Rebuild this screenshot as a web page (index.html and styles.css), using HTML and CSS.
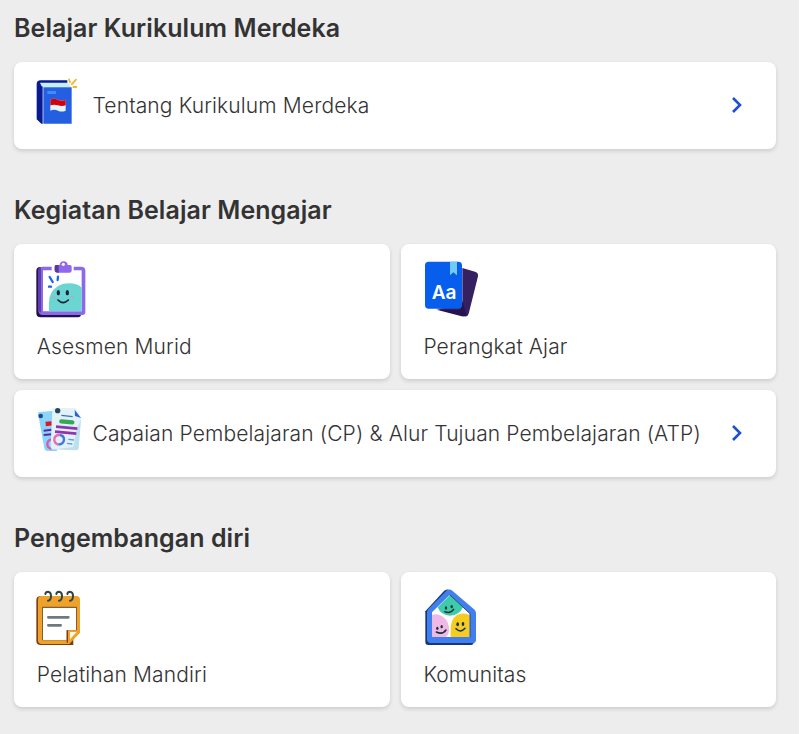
FILE: index.html
```html
<!DOCTYPE html>
<html lang="id">
<head>
  <meta charset="UTF-8">
  <meta name="viewport" content="width=device-width, initial-scale=1.0">
  <title>Kurikulum Merdeka</title>
  <link rel="stylesheet" href="styles.css">
</head>
<body>
  <main class="container">
    <section class="section">
      <h2>Belajar Kurikulum Merdeka</h2>
      <div class="menu">
        <a class="card card-wide">
          <svg class="icon" width="46" height="46" viewBox="30 24 138 138">
            <path d="M44 31h80v15H50v115h-4L32 148V42q0-11 12-11z" fill="#071a91"/>
            <path d="M42 38h85l9 14H54q-10-4-12-14z" fill="#c5eff8"/>
            <path d="M52 52h85v109H52z" fill="#245fe2"/>
            <path d="M64 63h26v9H64z" fill="#418bff"/>
            <path d="M73 89q11-5 23 0t23 0v33q-12 5-23 0t-23 0z" fill="#e6f3f9"/>
            <path d="M73 89q11-5 23 0t23 0v17q-12 4-23 0t-23 0z" fill="#d0020c"/>
            <path d="M129 28l3 9M150 29l-13 14M142 51h9" stroke="#f3b72a" stroke-width="5.5" stroke-linecap="round" fill="none"/>
          </svg>
          <span class="card-text">Tentang Kurikulum Merdeka</span>
          <svg class="arrow" width="12" height="18" viewBox="0 0 12 18"><path d="M2 2l7 7-7 7"/></svg>
        </a>
      </div>
    </section>

    <section class="section">
      <h2>Kegiatan Belajar Mengajar</h2>
      <div class="menu">
        <a class="card">
          <svg class="icon" width="50" height="58" viewBox="30 18 150 174">
            <path d="M43 39h18v131h104v11q0 9-9 9H44q-13 0-13-13V51q0-12 12-12z" fill="#24114a"/>
            <path d="M51 38h114q13 0 13 12v125q0 8-9 8H51q-14 0-14-14V50q0-12 14-12z" fill="#8d68ea"/>
            <path d="M37 50q0-9 8-11v137q-8-2-8-10z" fill="#5d3eae"/>
            <path d="M51 49h116v123H51z" fill="#fff"/>
            <path d="M69 172v-26q0-32 24-48 17-11 41-10 21 1 33 13v71z" fill="#6bd5d1"/>
            <path d="M77 36h66v17H77z" fill="#fff"/>
            <path d="M90 33h11q1-11 12-11t12 11h7q5 0 5 5v12q0 6-7 6H94q-8 0-8-8V38q0-5 4-5z" fill="#8d68ea"/>
            <path d="M90 33h8v23q-12 0-12-8V38q0-5 4-5z" fill="#593994"/>
            <circle cx="112" cy="31" r="5" fill="#f7f2ff"/>
            <path d="M71 69l9 15M96 68l-1 10M69 98h6" stroke="#1e64e9" stroke-width="7" stroke-linecap="round"/>
            <g fill="#17213d"><ellipse cx="97" cy="116" rx="5" ry="8"/><ellipse cx="124" cy="116" rx="5" ry="8"/></g>
            <path d="M96 138q15 16 31 0" fill="none" stroke="#17213d" stroke-width="5" stroke-linecap="round"/>
            <path d="M77 131q4-6 11 0M132 131q6-6 11 0" fill="none" stroke="#b3a9cd" stroke-width="4"/>
          </svg>
          <span class="card-text">Asesmen Murid</span>
        </a>
        <a class="card">
          <svg class="icon" width="57" height="58" viewBox="27 18 171 174">
            <path d="M145 42l38 11q11 4 9 14l-28 112q-3 10-13 8l-83-22 77-10z" fill="#352062"/>
            <path d="M145 140l-2 18q-2 9-12 9H68l75 20q11 2 14-5z" fill="#28134e"/>
            <rect x="33" y="23" width="111" height="141" rx="11" fill="#075eed"/>
            <path d="M108 23h21v41l-11-9-10 9z" fill="#70cbfa"/>
            <text class="icon-label" x="53" y="136">Aa</text>
          </svg>
          <span class="card-text">Perangkat Ajar</span>
        </a>
        <a class="card card-wide">
          <svg class="icon" width="46" height="46" viewBox="30 24 138 138">
            <path d="M36 46q0-4 6-4l44-4 7 121H63q-7 0-8-8z" fill="#8ad5fc"/>
            <path d="M53 98l24-3M53 111l24-2" stroke="#5b29a7" stroke-width="6"/>
            <path d="M59 78l18-2" stroke="#dd1726" stroke-width="13"/>
            <path d="M75 124q-12 4-11 16 1 11 13 12" fill="none" stroke="#d65cac" stroke-width="7"/>
            <circle cx="44" cy="54" r="7" fill="#174b90"/>
            <path d="M83 30h65l17 29-8 89q0 8-7 8l-67-2q-8 0-9-8l5-109q0-7 4-7z" fill="#e2f2f8"/>
            <path d="M146 35l19 25-18-6z" fill="#2a62d6"/>
            <path d="M153 90l12-25-7 86q-1 6-8 6l-63-3 55-7z" fill="#bde0eb"/>
            <circle cx="95" cy="38" r="8" fill="#24445f"/>
            <path d="M106 52l34 4" stroke="#366bd3" stroke-width="4"/>
            <path d="M106 70l33 3" stroke="#34a853" stroke-width="13" stroke-linecap="round"/>
            <path d="M90 86l64 6M87 101l64 6" stroke="#9134af" stroke-width="8"/>
            <path d="M102 111q-15-1-17 12-1 13 12 17" fill="none" stroke="#e471ae" stroke-width="7"/>
            <path d="M102 111q12 2 12 14-1 14-17 15" fill="none" stroke="#4776d9" stroke-width="7"/>
            <path d="M127 124l17 2M123 136l16 2" stroke="#5c9ae6" stroke-width="4"/>
          </svg>
          <span class="card-text">Capaian Pembelajaran (CP) &amp; Alur Tujuan Pembelajaran (ATP)</span>
          <svg class="arrow" width="12" height="18" viewBox="0 0 12 18"><path d="M2 2l7 7-7 7"/></svg>
        </a>
      </div>
    </section>

    <section class="section">
      <h2>Pengembangan diri</h2>
      <div class="menu">
        <a class="card">
          <svg class="icon" width="46" height="58" viewBox="30 18 138 174">
            <path d="M42 43h100v146H44q-13 0-13-13V55q0-12 11-12z" fill="#803d15"/>
            <path d="M47 42h104q11 0 11 11v99l-32 34H47q-11 0-11-11V53q0-11 11-11z" fill="#eda32b"/>
            <path d="M48 74h105v73h-29v28H48z" fill="#8a5a35"/>
            <path d="M51 78h99v67h-28v29H51z" fill="#fff"/>
            <path d="M122 145h4v37h-4z" fill="#803d15"/>
            <path d="M126 145h34l-34 37z" fill="#eda32b"/>
            <path d="M132 150h20l-20 22z" fill="#fff8e7"/>
            <path d="M67 106h60M67 130h37" stroke="#6d7981" stroke-width="8" stroke-linecap="round"/>
            <path d="M58 36q1-7 8-7 9 1 9 12 0 14-9 15M91 36q1-7 8-7 9 1 9 12 0 14-9 15M124 36q1-7 8-7 9 1 9 12 0 14-9 15" fill="none" stroke="#314442" stroke-width="6" stroke-linecap="round"/>
          </svg>
          <span class="card-text">Pelatihan Mandiri</span>
        </a>
        <a class="card">
          <svg class="icon" width="57" height="58" viewBox="27 18 171 174">
            <path d="M90 27q9-9 21 0l68 59v94q0 9-9 9H43q-9 0-9-9V88z" fill="#153779"/>
            <path d="M97 26q9-7 19 1l64 55q6 5 6 11v80q0 10-10 10H50q-11 0-11-11V91q0-6 5-11z" fill="#427fee"/>
            <path d="M106 40l62 55v70H54V91z" fill="#fff"/>
            <path d="M71 76l37-37 39 36q-11 26-39 26-27 0-37-25z" fill="#3dcbab"/>
            <path d="M54 99q19-7 37 9 15 15 14 34 0 16-9 23H54z" fill="#efb9e7"/>
            <path d="M110 165V142q0-29 18-42 17-10 39-1v66z" fill="#f7cc20"/>
            <path d="M108 39l60 56v70" fill="none" stroke="#2c4a78" stroke-width="3"/>
            <g fill="#17312f"><ellipse cx="96" cy="78" rx="3.5" ry="5"/><ellipse cx="113" cy="74" rx="3.5" ry="5"/><ellipse cx="70" cy="139" rx="3.5" ry="5"/><ellipse cx="83" cy="134" rx="3.5" ry="5"/><ellipse cx="131" cy="127" rx="4" ry="6"/><ellipse cx="147" cy="126" rx="4" ry="6"/></g>
            <path d="M92 89q17 7 27-7M67 150q19 9 29-6M126 140q14 14 27-1" fill="none" stroke="#17312f" stroke-width="4.5" stroke-linecap="round"/>
          </svg>
          <span class="card-text">Komunitas</span>
        </a>
      </div>
    </section>
  </main>
</body>
</html>
```

FILE: styles.css
```css
* {
  box-sizing: border-box;
}

body {
  margin: 0;
  background: #fff;
  font-family: Inter, "Liberation Sans", sans-serif;
  color: #333;
}

.container {
  width: 799px;
  height: 734px;
  padding: 10px 22.6px 0 14px;
  background: #ededed;
  overflow: hidden;
}

.section {
  margin-bottom: 43.2px;
}

h2 {
  margin: 0 0 16px;
  font-size: 25px;
  line-height: 36px;
  font-weight: 600;
  letter-spacing: 0.07px;
  white-space: nowrap;
}

.menu {
  display: grid;
  grid-template-columns: 1fr 1fr;
  gap: 11px;
}

.card {
  display: flex;
  flex-direction: column;
  align-items: flex-start;
  height: 135px;
  padding: 16px 22px;
  background: #fff;
  border-radius: 8px;
  box-shadow: 0 2px 4px rgba(0, 0, 0, 0.14);
}

.card-wide {
  grid-column: 1 / -1;
  flex-direction: row;
  align-items: center;
  height: 87px;
  padding: 0 33px 0 22px;
}

.icon {
  flex: none;
  display: block;
}

.card-wide .icon {
  margin: 0 10.5px 9px 0;
}

.icon-label {
  font-size: 57px;
  font-weight: 600;
  fill: #fff;
}

.card-text {
  margin: 14.6px 0 0 0.7px;
  font-size: 21px;
  line-height: 28px;
  font-weight: 300;
  letter-spacing: 0.13px;
  white-space: nowrap;
}

.card-wide .card-text {
  margin: 0;
}

.arrow {
  margin: -1px 0 0 auto;
  fill: none;
  stroke: #1d50d0;
  stroke-width: 2.6;
}
```
